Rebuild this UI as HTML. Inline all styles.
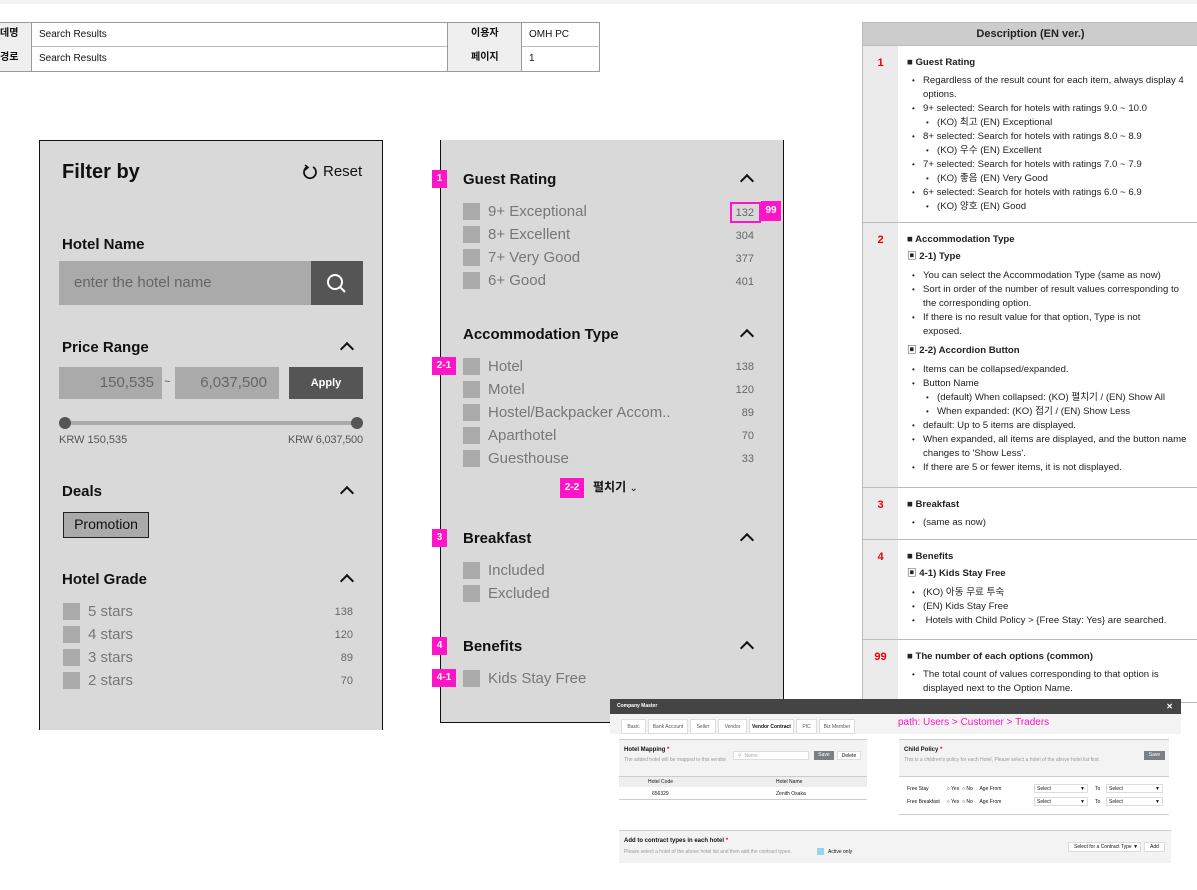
<!DOCTYPE html>
<html><head><meta charset="utf-8"><style>
*{box-sizing:border-box;margin:0;padding:0}
body{width:1197px;height:890px;position:relative;background:#fff;font-family:"Liberation Sans","Noto Sans CJK KR",sans-serif;overflow:hidden;color:#111}
.a{position:absolute;white-space:nowrap}
.cb{position:absolute;width:17px;height:17px;background:#aaa}
.it{position:absolute;font-size:15px;color:#777;line-height:18px}
.ct{position:absolute;font-size:11px;color:#666;text-align:right;width:40px;line-height:14px}
.h{position:absolute;font-size:15px;font-weight:bold;line-height:18px}
.chev{position:absolute;width:10px;height:10px;border-left:2px solid #111;border-top:2px solid #111;transform:rotate(45deg)}
.bd{position:absolute;background:#ff14c8;color:#fff;font-size:10px;font-weight:bold;height:18px;display:flex;align-items:center;justify-content:center;line-height:10px}
.tt{font-size:10px;line-height:14px}
.d{font-size:9.6px;line-height:14px;color:#222}
.d ul{list-style:none}
.d li{position:relative;padding-left:16px}
.d li:before{content:"•";position:absolute;left:5px;font-size:8px}
.d li.s{padding-left:30px}
.d li.s:before{left:19px}
.d b{font-size:9.6px}
.num{position:absolute;left:0;width:35px;text-align:center;color:#e00;font-weight:bold;font-size:11px}
.row{position:absolute;left:0;width:335px;border-top:1px solid #bbb}
.m{font-size:5px;color:#555}
</style></head><body>
<div class="a" style="left:0;top:0;width:1197px;height:4px;background:#f3f3f3"></div>

<!-- top table -->
<div class="a" style="left:0;top:22px;width:600px;height:50px;border:1px solid #999;border-left:none"></div>
<div class="a" style="left:0;top:46px;width:600px;height:1px;background:#bbb"></div>
<div class="a" style="left:0;top:23px;width:32px;height:48px;background:#efefef;border-right:1px solid #999"></div>
<div class="a" style="left:447px;top:23px;width:75px;height:48px;background:#efefef;border-left:1px solid #999;border-right:1px solid #999"></div>
<div class="a tt" style="left:0;top:27px;font-weight:bold">데명</div>
<div class="a tt" style="left:0;top:51px;font-weight:bold">경로</div>
<div class="a tt" style="left:39px;top:28px">Search Results</div>
<div class="a tt" style="left:39px;top:52px">Search Results</div>
<div class="a tt" style="left:471px;top:27px;font-weight:bold">이용자</div>
<div class="a tt" style="left:471px;top:51px;font-weight:bold">페이지</div>
<div class="a tt" style="left:529px;top:28px">OMH PC</div>
<div class="a tt" style="left:529px;top:52px">1</div>

<!-- left panel -->
<div class="a" style="left:39px;top:140px;width:344px;height:590px;background:#d9d9d9;border:1px solid #111;border-bottom:none"></div>
<div class="a" style="left:62px;top:161px;font-size:20px;font-weight:bold">Filter by</div>
<svg class="a" style="left:302px;top:164px" width="16" height="16" viewBox="0 0 16 16"><path d="M5 3 A6 6 0 1 0 11 3" fill="none" stroke="#111" stroke-width="1.8"/><path d="M3 1 L6 3.5 L3 6" fill="none" stroke="#111" stroke-width="1.6"/></svg>
<div class="a" style="left:323px;top:163px;font-size:15px">Reset</div>
<div class="h" style="left:62px;top:236px">Hotel Name</div>
<div class="a" style="left:59px;top:261px;width:252px;height:44px;background:#aaa"></div>
<div class="a" style="left:74px;top:274px;font-size:15px;color:#666">enter the hotel name</div>
<div class="a" style="left:311px;top:261px;width:52px;height:44px;background:#555"></div>
<svg class="a" style="left:326px;top:273px" width="22" height="22" viewBox="0 0 22 22"><circle cx="9" cy="9" r="7" fill="none" stroke="#fff" stroke-width="2"/><path d="M14 14 L19 19" stroke="#fff" stroke-width="2"/></svg>
<div class="h" style="left:62px;top:339px">Price Range</div>
<div class="chev" style="left:342px;top:344px"></div>
<div class="a" style="left:59px;top:367px;width:103px;height:32px;background:#aaa;font-size:15px;color:#666;text-align:right;padding:7px 8px">150,535</div>
<div class="a" style="left:164px;top:376px;font-size:11px;color:#555">~</div>
<div class="a" style="left:175px;top:367px;width:104px;height:32px;background:#aaa;font-size:15px;color:#666;text-align:right;padding:7px 12px">6,037,500</div>
<div class="a" style="left:289px;top:367px;width:74px;height:32px;background:#555;color:#fff;font-size:11px;font-weight:bold;text-align:center;line-height:32px">Apply</div>
<div class="a" style="left:65px;top:421px;width:292px;height:4px;background:#aaa"></div>
<div class="a" style="left:59px;top:417px;width:12px;height:12px;border-radius:50%;background:#555"></div>
<div class="a" style="left:351px;top:417px;width:12px;height:12px;border-radius:50%;background:#555"></div>
<div class="a" style="left:59px;top:434px;font-size:11px;color:#555">KRW 150,535</div>
<div class="a" style="left:288px;top:434px;font-size:11px;color:#555;letter-spacing:-0.2px">KRW 6,037,500</div>
<div class="h" style="left:62px;top:483px">Deals</div>
<div class="chev" style="left:342px;top:488px"></div>
<div class="a" style="left:63px;top:512px;width:86px;height:26px;background:#aaa;border:1.5px solid #222;font-size:14px;text-align:center;line-height:23px">Promotion</div>
<div class="h" style="left:62px;top:571px">Hotel Grade</div>
<div class="chev" style="left:342px;top:576px"></div>
<div class="cb" style="left:63px;top:603px"></div><div class="it" style="left:88px;top:603px">5 stars</div><div class="ct" style="left:313px;top:605px">138</div>
<div class="cb" style="left:63px;top:626px"></div><div class="it" style="left:88px;top:626px">4 stars</div><div class="ct" style="left:313px;top:628px">120</div>
<div class="cb" style="left:63px;top:649px"></div><div class="it" style="left:88px;top:649px">3 stars</div><div class="ct" style="left:313px;top:651px">89</div>
<div class="cb" style="left:63px;top:672px"></div><div class="it" style="left:88px;top:672px">2 stars</div><div class="ct" style="left:313px;top:674px">70</div>

<!-- middle panel -->
<div class="a" style="left:440px;top:140px;width:344px;height:583px;background:#d9d9d9;border:1px solid #111;border-top:none"></div>
<div class="bd" style="left:432px;top:170px;width:15px">1</div>
<div class="h" style="left:463px;top:171px">Guest Rating</div>
<div class="chev" style="left:742px;top:176px"></div>
<div class="cb" style="left:463px;top:203px"></div><div class="it" style="left:488px;top:203px">9+ Exceptional</div><div class="ct" style="left:714px;top:206px">132</div>
<div class="a" style="left:730px;top:202px;width:31px;height:21px;border:2px solid #ff14c8"></div>
<div class="bd" style="left:761px;top:201px;width:20px;height:20px">99</div>
<div class="cb" style="left:463px;top:226px"></div><div class="it" style="left:488px;top:226px">8+ Excellent</div><div class="ct" style="left:714px;top:229px">304</div>
<div class="cb" style="left:463px;top:249px"></div><div class="it" style="left:488px;top:249px">7+ Very Good</div><div class="ct" style="left:714px;top:252px">377</div>
<div class="cb" style="left:463px;top:272px"></div><div class="it" style="left:488px;top:272px">6+ Good</div><div class="ct" style="left:714px;top:275px">401</div>

<div class="h" style="left:463px;top:326px">Accommodation Type</div>
<div class="chev" style="left:742px;top:331px"></div>
<div class="bd" style="left:432px;top:357px;width:24px">2-1</div>
<div class="cb" style="left:463px;top:358px"></div><div class="it" style="left:488px;top:358px">Hotel</div><div class="ct" style="left:714px;top:360px">138</div>
<div class="cb" style="left:463px;top:381px"></div><div class="it" style="left:488px;top:381px">Motel</div><div class="ct" style="left:714px;top:383px">120</div>
<div class="cb" style="left:463px;top:404px"></div><div class="it" style="left:488px;top:404px">Hostel/Backpacker Accom..</div><div class="ct" style="left:714px;top:406px">89</div>
<div class="cb" style="left:463px;top:427px"></div><div class="it" style="left:488px;top:427px">Aparthotel</div><div class="ct" style="left:714px;top:429px">70</div>
<div class="cb" style="left:463px;top:450px"></div><div class="it" style="left:488px;top:450px">Guesthouse</div><div class="ct" style="left:714px;top:452px">33</div>
<div class="bd" style="left:560px;top:478px;width:24px;height:20px">2-2</div>
<div class="a" style="left:593px;top:479px;font-size:12px;font-weight:bold;line-height:16px">펼치기 <span style="font-weight:normal;font-size:10px">⌄</span></div>

<div class="bd" style="left:432px;top:529px;width:15px">3</div>
<div class="h" style="left:463px;top:530px">Breakfast</div>
<div class="chev" style="left:742px;top:535px"></div>
<div class="cb" style="left:463px;top:562px"></div><div class="it" style="left:488px;top:562px">Included</div>
<div class="cb" style="left:463px;top:585px"></div><div class="it" style="left:488px;top:585px">Excluded</div>

<div class="bd" style="left:432px;top:637px;width:15px">4</div>
<div class="h" style="left:463px;top:638px">Benefits</div>
<div class="chev" style="left:742px;top:643px"></div>
<div class="bd" style="left:432px;top:669px;width:24px">4-1</div>
<div class="cb" style="left:463px;top:670px"></div><div class="it" style="left:488px;top:670px">Kids Stay Free</div>

<!-- description -->
<div class="a d" style="left:862px;top:22px;width:335px;height:681px;border:1px solid #bbb;border-right:none">
 <div class="a" style="left:0;top:0;width:335px;height:22px;background:#ccc;text-align:center;font-weight:bold;font-size:11px;line-height:22px">Description (EN ver.)</div>
 <div class="a" style="left:0;top:22px;width:35px;height:660px;background:#ebebeb"></div>
 <div class="row" style="top:22px"><div class="num" style="top:10px">1</div>
  <div class="a" style="left:44px;top:10px;width:285px;white-space:normal"><b>■ Guest Rating</b><ul style="margin-top:4px">
  <li>Regardless of the result count for each item, always display 4 options.</li>
  <li>9+ selected: Search for hotels with ratings 9.0 ~ 10.0</li><li class="s">(KO) 최고 (EN) Exceptional</li>
  <li>8+ selected: Search for hotels with ratings 8.0 ~ 8.9</li><li class="s">(KO) 우수 (EN) Excellent</li>
  <li>7+ selected: Search for hotels with ratings 7.0 ~ 7.9</li><li class="s">(KO) 좋음 (EN) Very Good</li>
  <li>6+ selected: Search for hotels with ratings 6.0 ~ 6.9</li><li class="s">(KO) 양호 (EN) Good</li></ul></div></div>
 <div class="row" style="top:199px"><div class="num" style="top:10px">2</div>
  <div class="a" style="left:44px;top:10px;width:285px;white-space:normal"><b>■ Accommodation Type</b><br><b style="display:block;margin-top:3px">▣ 2-1) Type</b><ul style="margin-top:5px">
  <li>You can select the Accommodation Type (same as now)</li>
  <li>Sort in order of the number of result values corresponding to the corresponding option.</li>
  <li>If there is no result value for that option, Type is not<br>exposed.</li></ul>
  <b style="display:block;margin-top:5px">▣ 2-2) Accordion Button</b><ul style="margin-top:5px">
  <li>Items can be collapsed/expanded.</li><li>Button Name</li>
  <li class="s">(default) When collapsed: (KO) 펼치기 / (EN) Show All</li><li class="s">When expanded: (KO) 접기 / (EN) Show Less</li>
  <li>default: Up to 5 items are displayed.</li>
  <li>When expanded, all items are displayed, and the button name changes to 'Show Less'.</li>
  <li>If there are 5 or fewer items, it is not displayed.</li></ul></div></div>
 <div class="row" style="top:464px"><div class="num" style="top:10px">3</div>
  <div class="a" style="left:44px;top:10px"><b>■ Breakfast</b><ul style="margin-top:4px"><li>(same as now)</li></ul></div></div>
 <div class="row" style="top:516px"><div class="num" style="top:10px">4</div>
  <div class="a" style="left:44px;top:10px"><b>■ Benefits</b><b style="display:block;margin-top:3px">▣ 4-1) Kids Stay Free</b><ul style="margin-top:5px">
  <li>(KO) 아동 무료 투숙</li><li>(EN) Kids Stay Free</li><li>&nbsp;Hotels with Child Policy &gt; {Free Stay: Yes} are searched.</li></ul></div></div>
 <div class="row" style="top:616px"><div class="num" style="top:10px">99</div>
  <div class="a" style="left:44px;top:10px;width:285px;white-space:normal"><b>■ The number of each options (common)</b><ul style="margin-top:4px"><li>The total count of values corresponding to that option is displayed next to the Option Name.</li></ul></div></div>
</div>

<!-- company master -->
<div class="a" style="left:610px;top:699px;width:571px;height:171px;background:#fff"></div>
<div class="a" style="left:610px;top:699px;width:571px;height:15px;background:#444;color:#fff;font-size:5px;font-weight:bold;line-height:15px;padding-left:7px">Company Master<span style="position:absolute;right:8px;font-size:8px">✕</span></div>
<div class="a" style="left:610px;top:714px;width:571px;height:20px;background:#f3f3f3"></div>
<div class="a m" style="left:621px;top:719px;display:flex;gap:2px">
<span style="border:1px solid #ddd;background:#fff;width:25px;height:15px;text-align:center;line-height:14px">Basic</span>
<span style="border:1px solid #ddd;background:#fff;width:40px;height:15px;text-align:center;line-height:14px">Bank Account</span>
<span style="border:1px solid #ddd;background:#fff;width:26px;height:15px;text-align:center;line-height:14px">Seller</span>
<span style="border:1px solid #ddd;background:#fff;width:29px;height:15px;text-align:center;line-height:14px">Vendor</span>
<span style="border:1px solid #ddd;background:#fff;width:45px;height:15px;text-align:center;line-height:14px;color:#111;font-weight:bold">Vendor Contract</span>
<span style="border:1px solid #ddd;background:#fff;width:21px;height:15px;text-align:center;line-height:14px">PIC</span>
<span style="border:1px solid #ddd;background:#fff;width:36px;height:15px;text-align:center;line-height:14px">Biz Member</span></div>
<div class="a" style="left:898px;top:717px;font-size:10px;color:#ff14c8">path: Users &gt; Customer &gt; Traders</div>
<div class="a" style="left:619px;top:739px;width:248px;height:38px;background:#f3f3f3;border-top:1px solid #ccc"></div>
<div class="a" style="left:624px;top:747px;font-size:6px;font-weight:bold">Hotel Mapping <span style="color:#e00">*</span></div>
<div class="a m" style="left:624px;top:757px;color:#999">The added hotel will be mapped in this vendor</div>
<div class="a m" style="left:733px;top:751px;width:76px;height:9px;background:#fff;border:1px solid #ddd;padding-left:4px;color:#aaa;line-height:8px">⚲ &nbsp;Name</div>
<div class="a m" style="left:814px;top:751px;width:20px;height:9px;background:#7a8088;color:#fff;text-align:center;line-height:9px">Save</div>
<div class="a m" style="left:837px;top:751px;width:24px;height:9px;background:#fff;border:1px solid #ddd;color:#111;text-align:center;line-height:8px">Delete</div>
<div class="a" style="left:619px;top:776px;width:248px;height:11px;background:#eee;border-top:1px solid #ccc"></div>
<div class="a m" style="left:648px;top:779px;color:#111">Hotel Code</div>
<div class="a m" style="left:776px;top:779px;color:#111">Hotel Name</div>
<div class="a m" style="left:652px;top:791px;color:#111">656329</div>
<div class="a m" style="left:776px;top:791px;color:#111">Zenith Osaka</div>
<div class="a" style="left:619px;top:799px;width:248px;height:1px;background:#ccc"></div>
<div class="a" style="left:899px;top:739px;width:270px;height:37px;background:#f3f3f3;border-top:1px solid #ccc"></div>
<div class="a" style="left:904px;top:747px;font-size:6px;font-weight:bold">Child Policy <span style="color:#e00">*</span></div>
<div class="a m" style="left:904px;top:757px;color:#999">This is a children's policy for each Hotel, Please select a hotel of the above hotel list first.</div>
<div class="a m" style="left:1144px;top:751px;width:21px;height:9px;background:#7a8088;color:#fff;text-align:center;line-height:9px">Save</div>
<div class="a" style="left:899px;top:776px;width:270px;height:1px;background:#ccc"></div>
<div class="a m" style="left:907px;top:786px;color:#111">Free Stay &nbsp; &nbsp; &nbsp; &nbsp; &nbsp; &nbsp; ○ Yes &nbsp;○ No &nbsp; &nbsp; Age From</div>
<div class="a m" style="left:907px;top:799px;color:#111">Free Breakfast &nbsp; &nbsp; ○ Yes &nbsp;○ No &nbsp; &nbsp; Age From</div>
<div class="a m" style="left:1034px;top:784px;width:54px;height:9px;border:1px solid #ddd;color:#111;padding-left:2px;line-height:8px">Select<span style="float:right;margin-right:2px">▼</span></div>
<div class="a m" style="left:1034px;top:797px;width:54px;height:9px;border:1px solid #ddd;color:#111;padding-left:2px;line-height:8px">Select<span style="float:right;margin-right:2px">▼</span></div>
<div class="a m" style="left:1095px;top:786px;color:#111">To</div><div class="a m" style="left:1095px;top:799px;color:#111">To</div>
<div class="a m" style="left:1106px;top:784px;width:57px;height:9px;border:1px solid #ddd;color:#111;padding-left:2px;line-height:8px">Select<span style="float:right;margin-right:2px">▼</span></div>
<div class="a m" style="left:1106px;top:797px;width:57px;height:9px;border:1px solid #ddd;color:#111;padding-left:2px;line-height:8px">Select<span style="float:right;margin-right:2px">▼</span></div>
<div class="a" style="left:899px;top:814px;width:270px;height:1px;background:#ccc"></div>
<div class="a" style="left:619px;top:830px;width:552px;height:33px;background:#f3f3f3;border-top:1px solid #ccc"></div>
<div class="a" style="left:624px;top:838px;font-size:6px;font-weight:bold">Add to contract types in each hotel <span style="color:#e00">*</span></div>
<div class="a m" style="left:624px;top:849px;color:#999">Please select a hotel of the above hotel list and then add the contract types.</div>
<div class="a" style="left:817px;top:848px;width:7px;height:7px;background:#9cd3ea"></div>
<div class="a m" style="left:828px;top:849px;color:#111">Active only</div>
<div class="a m" style="left:1068px;top:842px;width:73px;height:10px;background:#fff;border:1px solid #ddd;color:#111;padding-left:5px;line-height:9px">Select for a Contract Type ▼</div>
<div class="a m" style="left:1144px;top:842px;width:21px;height:10px;background:#fff;border:1px solid #ddd;color:#111;text-align:center;line-height:9px">Add</div>
</body></html>
